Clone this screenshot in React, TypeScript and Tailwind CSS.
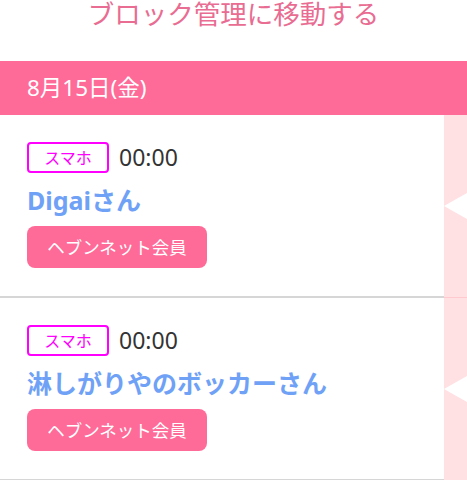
const font = "font-['Noto_Sans','Noto_Sans_CJK_JP',sans-serif]";

type Entry = {
  device: string;
  time: string;
  name: string;
  member: string;
};

const entries: Entry[] = [
  { device: "スマホ", time: "00:00", name: "Digaiさん", member: "ヘブンネット会員" },
  { device: "スマホ", time: "00:00", name: "淋しがりやのボッカーさん", member: "ヘブンネット会員" },
];

const EntryRow = ({ device, time, name, member }: Entry) => {
  return (
    <div className="flex">
      <div className="flex-1 border-b-2 border-[#d6d6d6] pl-[27px] pt-[27px] pb-[28px]">
        <div className="flex items-center">
          <span className="flex h-[31px] w-[82px] items-center justify-center rounded-[4px] border-2 border-[#ff00ff] text-[16px] leading-none text-[#ff00ff]">
            {device}
          </span>
          <span className="ml-[10px] text-[23px] leading-none text-[#333333]">{time}</span>
        </div>
        <div className="mt-[9px] text-[25px] font-bold leading-[36px] text-[#6fa1f6]">{name}</div>
        <button className="mt-[8px] flex h-[42px] w-[180px] items-center justify-center rounded-[8px] bg-[#ff6b98] text-[17.5px] text-white">
          {member}
        </button>
      </div>
      <div className="flex w-[23px] items-center border-b border-[#ffc9cf] bg-[#ffe1e4]">
        <div className="h-0 w-0 border-y-[13px] border-r-[23px] border-y-transparent border-r-white" />
      </div>
    </div>
  );
};

const App = () => {
  return (
    <div className={`h-[480px] w-[467px] overflow-hidden bg-white ${font}`}>
      <div className="h-[61px] text-center text-[26.5px] leading-[28px] text-[#e96c92]">
        ブロック管理に移動する
      </div>
      <div className="flex h-[54px] items-center bg-[#ff6b98] pl-[27px] text-[22.5px] text-white">
        8月15日(金)
      </div>
      {entries.map((entry, i) => (
        <EntryRow key={i} {...entry} />
      ))}
    </div>
  );
};

export default App;
